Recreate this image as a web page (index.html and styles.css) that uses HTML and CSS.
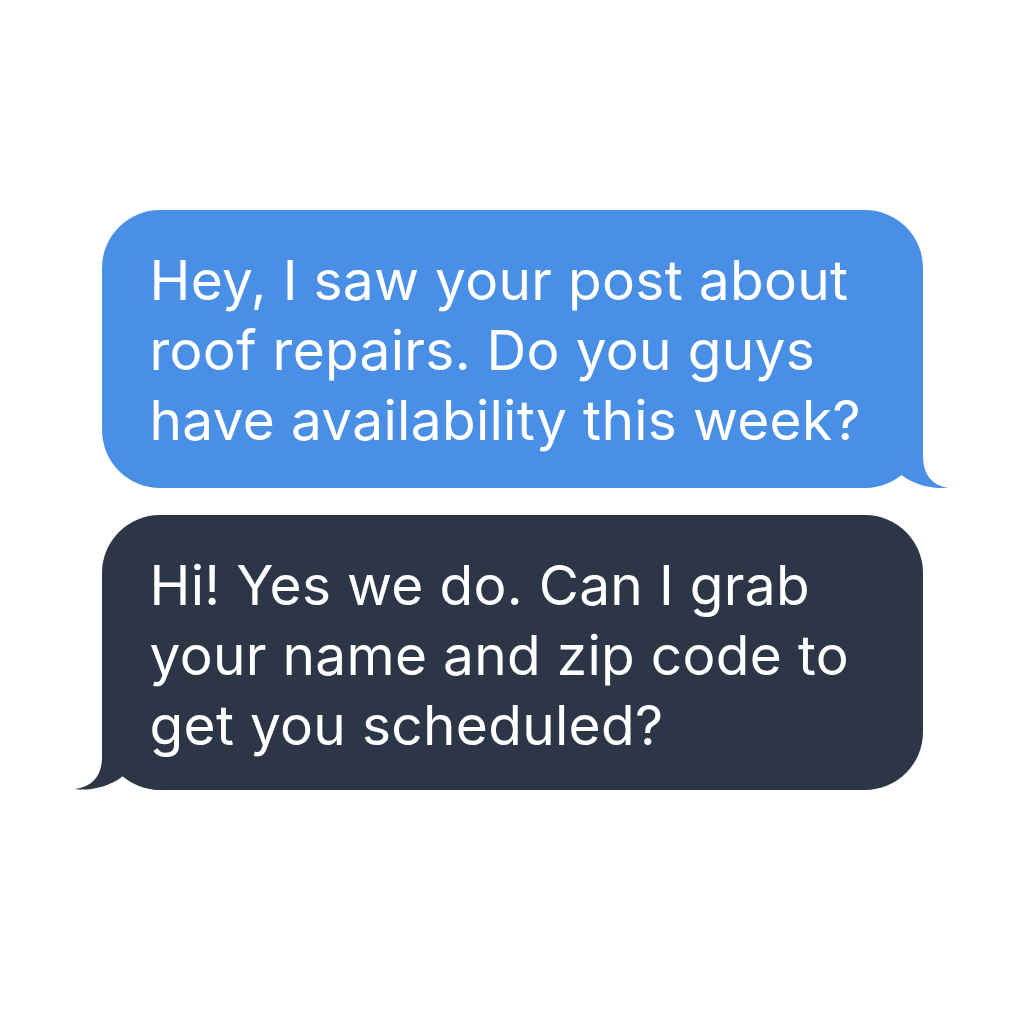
FILE: index.html
```html
<!DOCTYPE html>
<html lang="en">
<head>
    <meta charset="UTF-8">
    <meta name="viewport" content="width=device-width, initial-scale=1.0">
    <title>Chat</title>
    <link rel="stylesheet" href="styles.css">
</head>
<body>
    <div class="thread">
        <!-- Incoming question -->
        <div class="bubble sent">
            <p>Hey, I saw your post about<br>roof repairs. Do you guys<br>have availability this week?</p>
            <svg class="tail tail-right" width="88" height="68" viewBox="0 0 88 68">
                <path d="M63 0 L63 35 C63 55 72 65 88 68 C75 69 55 66 40 54 C30 62 15 68 0 68 L0 0 Z" fill="#4a8fe6"/>
            </svg>
        </div>

        <!-- Reply -->
        <div class="bubble reply">
            <p>Hi! Yes we do. Can I grab<br>your name and zip code to<br>get you scheduled?</p>
            <svg class="tail tail-left" width="88" height="68" viewBox="0 0 88 68">
                <path d="M27 0 L27 35 C27 55 16 65 0 67 C13 69 33 66 48 54 C58 62 73 68 88 68 L88 0 Z" fill="#2c3647"/>
            </svg>
        </div>
    </div>
</body>
</html>
```

FILE: styles.css
```css
/* Page */
body {
    margin: 0;
    background-color: #fff;
    font-family: Inter, "Noto Sans", sans-serif;
}
.thread {
    display: flex;
    flex-direction: column;
    align-items: center;
    gap: 27px;
    padding-top: 210px;
}
/* Bubbles */
.bubble {
    position: relative;
    width: 821px;
    box-sizing: border-box;
    border-radius: 58px;
    padding: 35px 30px 33px 48px;
    color: #fff;
}
.bubble p {
    margin: 0;
    font-size: 55px;
    line-height: 70px;
    letter-spacing: 0.3px;
    position: relative;
    z-index: 1;
}
.sent {
    background-color: #4a8fe6;
}
.reply {
    background-color: #2c3647;
    padding-top: 35px;
    padding-bottom: 30px;
}
/* Tails */
.tail {
    position: absolute;
    bottom: 0;
}
.tail-right {
    right: -25px;
}
.tail-left {
    left: -27px;
}
```
